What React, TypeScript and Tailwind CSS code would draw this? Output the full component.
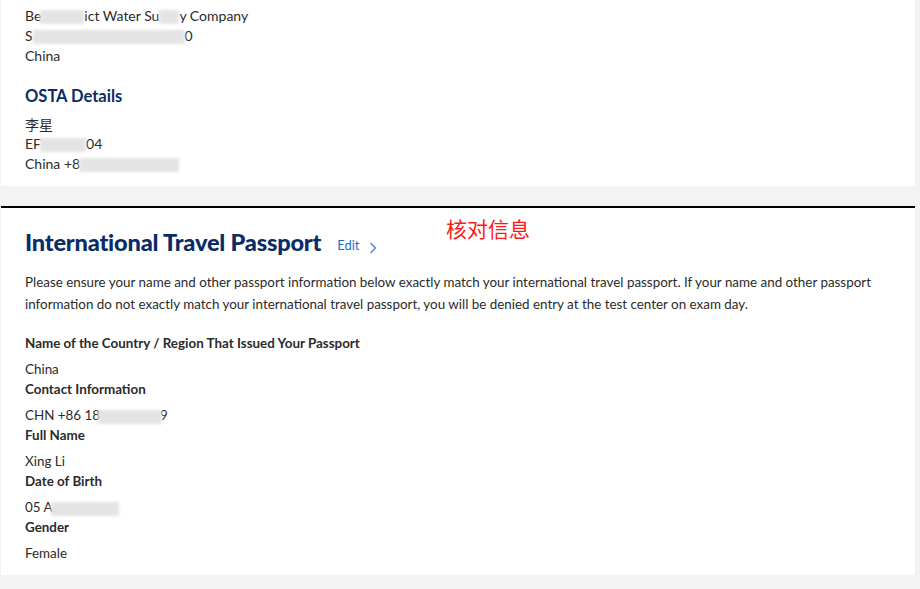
import { JSX } from "react";

// blurred mosaic used to hide personal data in the screenshot
function Masked({ w, className = "" }: { w: number; className?: string }): JSX.Element {
  return (
    <span
      className={`inline-block align-middle h-[14px] bg-[#e4e4e4] blur-[1.5px] ${className}`}
      style={{ width: w }}
    />
  );
}

interface Field {
  label: string;
  value: JSX.Element | string;
}

const fields: Field[] = [
  { label: "Name of the Country / Region That Issued Your Passport", value: "China" },
  {
    label: "Contact Information",
    value: (
      <>
        CHN +86 18<Masked w={64} className="-ml-[2px] -mr-[2px]" />9
      </>
    ),
  },
  { label: "Full Name", value: "Xing Li" },
  {
    label: "Date of Birth",
    value: (
      <>
        05 A<Masked w={68} className="-ml-[2px]" />
      </>
    ),
  },
  { label: "Gender", value: "Female" },
];

export default function App(): JSX.Element {
  return (
    <div className="min-h-[589px] w-[920px] bg-[#f3f3f3] pl-px font-['Lato','Noto_Sans_CJK_SC',sans-serif] text-[#2b2b2b]">
      {/* address + OSTA card */}
      <div className="w-[914px] bg-white pl-6 pt-[6px] pb-[12px] text-[14px] leading-[20px]">
        <div>
          Be<Masked w={44} className="-ml-[1px]" />ict Water Su<Masked w={20} />y Company
        </div>
        <div>
          S<Masked w={152} />0
        </div>
        <div>China</div>
        <h2 className="mt-[20px] mb-[8px] text-[16.5px] leading-[20px] font-bold text-[#0a2c66]">
          OSTA Details
        </h2>
        <div className="font-['Noto_Sans_CJK_SC',sans-serif]">李星</div>
        <div>
          EF<Masked w={46} className="-ml-[1px]" />04
        </div>
        <div>
          China +8<Masked w={100} className="-ml-[1px]" />
        </div>
      </div>

      <div className="h-[20px]" />
      <div className="h-[2px] w-[914px] bg-black" />

      {/* passport card */}
      <div className="relative w-[914px] bg-white pl-6 pt-[20px] pb-[12px]">
        <div className="flex items-end">
          <h1 className="text-[23.6px] leading-[28px] font-black tracking-[-0.2px] text-[#0a2c66]">
            International Travel Passport
          </h1>
          <a className="ml-4 mb-[2px] flex items-center text-[13px] leading-[18px] text-[#1a6fc9]">
            Edit
            <svg
              width="8"
              height="12"
              viewBox="0 0 8 12"
              className="ml-[9px] mt-[6px]"
              fill="none"
              stroke="#3d7fd0"
              strokeWidth="1.2"
            >
              <path d="M1.5 1 L6.5 6 L1.5 11" />
            </svg>
          </a>
        </div>
        <span className="absolute left-[445px] top-[7px] text-[21px] leading-[26px] text-[#ff1a1a] font-['Noto_Sans_CJK_SC',sans-serif]">
          核对信息
        </span>

        <p className="mt-[15px] mr-6 text-[13.4px] leading-[22px]">
          Please ensure your name and other passport information below exactly match your
          international travel passport. If your name and other passport information do not
          exactly match your international travel passport, you will be denied entry at the test
          center on exam day.
        </p>

        <div className="mt-[18px] text-[13.4px]">
          {fields.map((f) => (
            <div key={f.label}>
              <div className="font-bold leading-[20px]">{f.label}</div>
              <div className="mt-[6px] leading-[20px]">{f.value}</div>
            </div>
          ))}
        </div>
      </div>
    </div>
  );
}
